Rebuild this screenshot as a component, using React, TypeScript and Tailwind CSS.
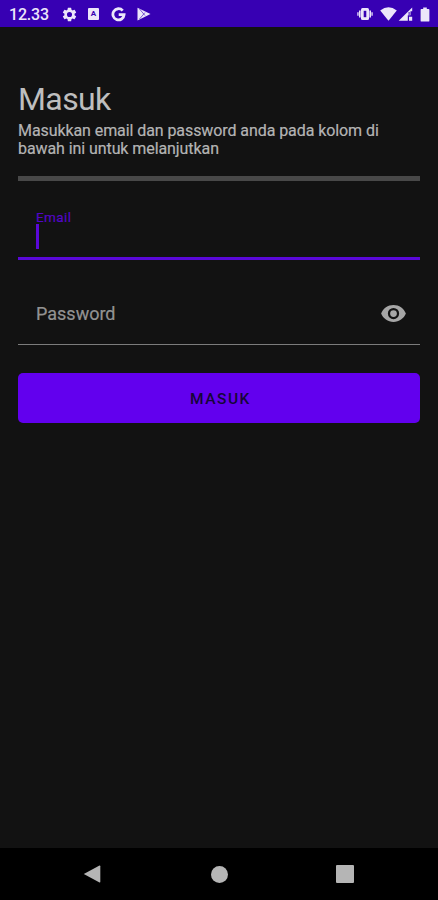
function StatusBar() {
    return (
        <header className="flex h-[27px] shrink-0 items-center bg-[#3700b3] pl-[9px] pr-2 pt-px text-[#ece6fa]">
            <span className="w-[52px] pt-px text-[16px] leading-none tracking-[-0.2px] font-medium">12.33</span>
            {/* settings */}
            <svg className="size-[17px]" viewBox="0 0 24 24" fill="currentColor">
                <path d="M19.14 12.94c.04-.3.06-.61.06-.94s-.02-.64-.07-.94l2.03-1.58a.49.49 0 0 0 .12-.61l-1.92-3.32a.49.49 0 0 0-.59-.22l-2.39.96c-.5-.38-1.03-.7-1.62-.94l-.36-2.54a.48.48 0 0 0-.48-.41h-3.84a.47.47 0 0 0-.47.41l-.36 2.54c-.59.24-1.13.57-1.62.94l-2.39-.96a.48.48 0 0 0-.59.22L2.74 8.87a.47.47 0 0 0 .12.61l2.03 1.58c-.05.3-.09.63-.09.94s.02.64.07.94l-2.03 1.58a.49.49 0 0 0-.12.61l1.92 3.32c.12.22.37.29.59.22l2.39-.96c.5.38 1.03.7 1.62.94l.36 2.54c.05.24.24.41.48.41h3.84c.24 0 .44-.17.47-.41l.36-2.54c.59-.24 1.13-.56 1.62-.94l2.39.96c.22.08.47 0 .59-.22l1.92-3.32a.47.47 0 0 0-.12-.61zM12 15.6a3.6 3.6 0 1 1 0-7.2 3.6 3.6 0 0 1 0 7.2z" />
            </svg>
            <span className="ml-[10px] flex h-3 w-[11px] items-center justify-center rounded-[1px] bg-[#ece6fa] text-[8px] font-bold leading-none text-[#3700b3]">A</span>
            {/* google */}
            <svg className="ml-3 h-[15px] w-[15px]" viewBox="0 0 15 15" fill="none" stroke="currentColor" strokeWidth="2.8">
                <path d="M11.700 3.600A5.600 5.600 0 1 0 13.100 7.700H7.700" />
            </svg>
            {/* play store */}
            <svg className="ml-[11px] h-[14px] w-[14px]" viewBox="0 0 14 14">
                <path d="M.5.800 13.500 7 .5 13.400z" fill="currentColor" />
                <path d="M2.500 2 8 8.500M2.500 12 8 5.500" stroke="#3700b3" strokeWidth=".6" />
            </svg>
            {/* vibrate */}
            <svg className="ml-auto h-[14px] w-4" viewBox="0 0 16 14">
                <path d="M2 3.500h1.600v7H2zM.3 5.300h1.300v3.400H.3zM12.400 3.500H14v7h-1.600zM14.400 5.300h1.300v3.400h-1.300z" fill="currentColor" />
                <rect x="4" y="1" width="8" height="12" rx="1.500" fill="currentColor" />
                <path d="M6.700 3.800h2.600v6.400H6.700z" fill="#3700b3" />
            </svg>
            <svg className="ml-[7px] h-[14px] w-[17px]" viewBox="0 0 17 14" fill="currentColor">
                <path d="M.2 3.600Q8.500-3 16.800 3.600L8.500 13.800z" />
            </svg>
            {/* mobile signal */}
            <svg className="ml-px h-[14px] w-[15px]" viewBox="0 0 15 14" fill="currentColor">
                <path d="M14.200.400v3.800h-1.700v4H9.800v5.500H.7zM11 9.800h3.200v3.900H11z" />
                <path d="M10.600 5h1v3h-1z" fill="#3700b3" />
            </svg>
            <svg className="ml-[7px] h-[15px] w-[10px]" viewBox="0 0 10 15" fill="currentColor">
                <path d="M3.200.400h3.600v1.500h1.700q.9 0 .9.900v10.900q0 .9-.9.900h-7q-.9 0-.9-.900V2.800q0-.9.900-.9h1.700z" />
            </svg>
        </header>
    );
}

function NavBar() {
    return (
        <nav className="flex h-[52px] shrink-0 items-center justify-between bg-black pl-[83px] pr-[84px] text-[#b5b5b5]">
            <svg className="h-[18px] w-[18px]" viewBox="0 0 18 18" fill="currentColor">
                <path d="M.8 9 16.500.600q.8-.2.800.700v15.400q0 .9-.8.700z" />
            </svg>
            <span className="ml-px size-[17px] rounded-full bg-[#b5b5b5]" />
            <span className="size-[18px] rounded-[1px] bg-[#b5b5b5]" />
        </nav>
    );
}

export default function App() {
    return (
        <div className="flex h-screen w-full flex-col bg-[#121212] font-['Roboto',sans-serif]">
            <StatusBar />
            <main className="flex flex-1 flex-col px-[18px] pt-[52px]">
                <h1 className="text-[32px] leading-[40px] tracking-[-0.6px] text-[#bebebe]">Masuk</h1>
                <p className="mt-[2.500px] text-[16px] leading-[18px] tracking-[-0.08px] text-[#b4b4b4] [-webkit-text-stroke:0.2px]">
                    Masukkan email dan password anda pada kolom di<br />bawah ini untuk melanjutkan
                </p>
                <hr className="mt-[18.500px] h-[5px] border-0 bg-[#484848]" />
                <div className="mt-[17px] flex h-[62px] flex-col border-b-3 border-[#5a08d8] px-[18px] pt-3">
                    <label className="text-[13.500px] leading-[14px] tracking-[0.4px] text-[#5206c6] [-webkit-text-stroke:0.2px]">Email</label>
                    <span className="h-[25px] w-[3px] bg-[#5a08d8]" />
                </div>
                <div className="mt-[22px] flex h-[63px] items-center justify-between border-b border-[#7c7c7c] pl-[18px] pr-[13px]">
                    <label className="text-[18px] text-[#929292] [-webkit-text-stroke:0.2px]">Password</label>
                    <svg className="size-[27px]" viewBox="0 0 24 24" fill="#a6a6a6">
                        <path d="M12 4.500C7 4.500 2.730 7.610 1 12c1.730 4.390 6 7.500 11 7.500s9.270-3.110 11-7.500c-1.730-4.390-6-7.500-11-7.500zM12 17a5 5 0 1 1 0-10 5 5 0 0 1 0 10zm0-8a3 3 0 1 0 0 6 3 3 0 0 0 0-6z" />
                    </svg>
                </div>
                <button className="mt-7 h-[50px] rounded-[5px] bg-[#6200ee] pl-[3px] pt-[3px] text-[15.500px] font-medium tracking-[1.500px] text-[#160638]">MASUK</button>
            </main>
            <NavBar />
        </div>
    );
}
